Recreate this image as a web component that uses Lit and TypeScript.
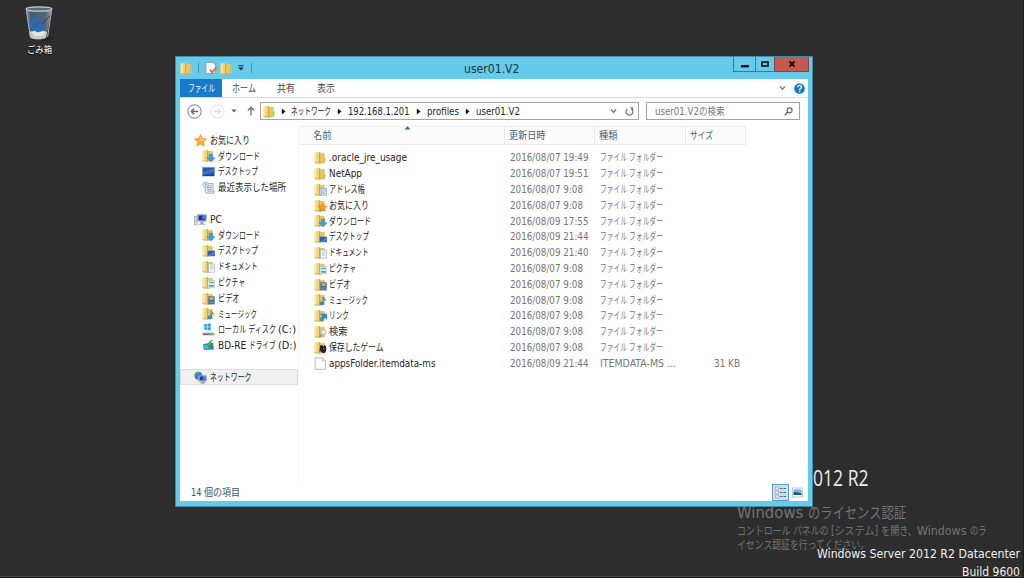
import { LitElement, html, css, svg } from "lit";
import { customElement, property } from "lit/decorators.js";

/** Single-line label condensed or widened to a fixed advance width. */
@customElement("fit-text")
class FitText extends LitElement {
  @property({ type: Number }) w = 0;
  @property() text = "";
  static styles = css`
    :host { display: inline-block; flex: none; white-space: nowrap; line-height: inherit; padding-top: 1.4px; }
    .in { display: inline-block; transform-origin: 0 50%; white-space: pre; }
  `;
  render() {
    return html`<span class="in">${this.text}</span>`;
  }
  updated() {
    const el = this.renderRoot.querySelector(".in") as HTMLElement;
    el.style.transform = "none";
    this.style.width = "auto";
    const natural = el.getBoundingClientRect().width;
    this.style.width = `${this.w}px`;
    if (natural > 0) {
      el.style.transform = `scaleX(${this.w / natural})`;
      el.style.marginRight = `${this.w - natural}px`;
    }
  }
}

const folder = svg`
  <path d="M.8 2 L6.8 .8 L7.8 1.600 L7.8 14.400 L.8 15.200Z" fill="#f1d67a"/>
  <path d="M6.400 2.800 L12 2.200 L13.200 2.800 L13.200 14 L6.400 15.400Z" fill="#e8c75f"/>
  <path d="M.8 2 L3 1.600 L3 15 L.8 15.200Z" fill="#f8e9a8"/>
  <path d="M6 1.800 L7.600 1.600 L7.600 15.200 L6 15.400Z" fill="#cfa83e"/>
  <path d="M.8 13.800 L7.400 14 L13.200 12.600 L13.200 14 L7 15.800 L.8 15.200Z" fill="#d9b348"/>`;

const overlays: Record<string, unknown> = {
  folder: svg`<path d="M12.4 8 h1.8 v5.4 l-1.8 .6z" fill="#e9cb6b"/><rect x="12" y="9.4" width="1.6" height="3" fill="#9bb9a4"/>`,
  contacts: svg`<rect x="7" y="6.6" width="8.6" height="8.4" fill="#e9f3fa" stroke="#7fa5c4" stroke-width=".9"/><path d="M7.4 8.6h8M9.4 11h4.6M9.4 13h4.6M8.6 9v6" stroke="#6ba1cc" stroke-width=".9"/>`,
  fav: svg`<path d="M10.6 5.4l1.6 3.2 3.6.4-2.6 2.5.7 3.6-3.3-1.7-3.3 1.7.7-3.6-2.6-2.5 3.6-.4z" fill="#f89a2a" stroke="#dd6a12" stroke-width=".7"/><path d="M10.6 7.4l.9 2 2 .4-2 1z" fill="#ffd88a"/>`,
  down: svg`<path d="M9 6.400h4.200v4.400H16L11.100 16 6.200 10.800H9z" fill="#3ba0e2" stroke="#1d7cc2" stroke-width=".6"/>`,
  desk: svg`<rect x="7" y="8.4" width="9" height="6.4" fill="#2760b8" stroke="#7b95bd" stroke-width=".7"/><path d="M7.4 14 L15.6 9.4V12L10 14.4z" fill="#4f8cd8"/>`,
  doc: svg`<path d="M8 5h7.4v10H8z" fill="#f6fafd" stroke="#9fb3c6" stroke-width=".8"/><path d="M9.6 7.4h4.4M9.6 9.4h4.4M9.6 11.4h4.4" stroke="#8eb6da" stroke-width=".8"/>`,
  pic: svg`<rect x="7.4" y="5.4" width="8.4" height="9.2" fill="#eef6fa" stroke="#a4b8bf" stroke-width=".7"/><rect x="9" y="7" width="5.4" height="2" fill="#4fa6d4"/><rect x="8.6" y="11" width="6" height="2.2" fill="#5f9c8b"/>`,
  video: svg`<rect x="7.6" y="5.4" width="8" height="9.8" fill="#4d5961"/><rect x="9.4" y="6.4" width="4.4" height="3.4" fill="#8fc1de"/><rect x="9.4" y="10.8" width="4.4" height="3.4" fill="#5f90b4"/><path d="M8.4 6v9M14.8 6v9" stroke="#c9d2d8" stroke-width=".7" stroke-dasharray="1 1"/>`,
  music: svg`<path d="M11.4 4.6v7.6" stroke="#2e8bd0" stroke-width="1.700"/><path d="M11.4 4c.6 2.4 4.400 2.8 3.600 7-.6-2-2.200-2.600-3.600-2.800z" fill="#3ba0e2"/><ellipse cx="9.600" cy="12.800" rx="2.700" ry="2.200" fill="#2e8bd0"/>`,
  link: svg`<path d="M8 6h7.800v7.200l-2.200-2.300c-2 .8-3 2.400-3.200 4.800-3.200-.8-3.400-4.800 .2-7z" fill="#2b8fdd" stroke="#1a6fb8" stroke-width=".5"/>`,
  search: svg`<path d="M9.4 11.6L6.8 15" stroke="#a28d55" stroke-width="1.6"/><circle cx="11.6" cy="8.8" r="3.2" fill="#dcebf3" stroke="#a9b4ba" stroke-width="1.1"/>`,
  game: svg`<path d="M7.6 5.600l2.400-.6 1.600 2 1.200-2 2 1.600 .4 4-1.400 3.800-3 .8-2-2.200-2.200-.4.6-3z" fill="#23211f"/><path d="M11 8.600l2 .4-.6 2z" fill="#9a8f7a"/>`,
};

const glyphs: Record<string, unknown> = {
  star: svg`<path d="M8 .8l2.200 4.700 5.200.6-3.900 3.500 1.100 5.200L8 12.200l-4.600 2.600 1.100-5.200L.6 6.100l5.200-.6z" fill="#fbac3a" stroke="#e88a1c" stroke-width=".9"/><path d="M8 3l1.400 3.400 3.600.5-4.600 1.600z" fill="#ffe19b"/>`,
  screen: svg`<rect x=".6" y="2.800" width="14.800" height="10.800" fill="#2458b0" stroke="#8fa6c8" stroke-width=".9"/><path d="M1 9 L15 4v4L1 12.600z" fill="#4276c8"/><rect x="1" y="12" width="14" height="1.400" fill="#1c3f7e"/>`,
  recent: svg`<path d="M4 3h9.600v9.400H15V14c-.4 1-1 1-2 1H5.500c-1 0-1.500-.6-1.500-1.600z" fill="#eef1f3" stroke="#8c9aa5" stroke-width="1"/><path d="M6 5.800h6M6 8h6M6 10.200h6M7 12.400h6" stroke="#8295a5" stroke-width="1"/><circle cx="4.200" cy="4.400" r="3.300" fill="#dfe9ef" stroke="#9fb0bc"/><path d="M4.200 2.600v2h1.600" stroke="#61778a" stroke-width=".8" fill="none"/>`,
  pc: svg`<rect x=".6" y="4" width="3.200" height="10.600" fill="#cfd6d0" stroke="#8d988f" stroke-width=".6"/><rect x="4.200" y="1.600" width="11.200" height="8.800" fill="#d7dce3" stroke="#9aa2ae" stroke-width=".7"/><rect x="5.400" y="2.800" width="8.800" height="6.400" fill="#1c2fb0"/><path d="M10 2.800h4.200v3L10 9.200z" fill="#4c74e0"/><path d="M8.400 10.600h3l.8 3H7.400z" fill="#9aa2ae"/><rect x="5.800" y="13.200" width="8.600" height="1.400" fill="#b9bfc8"/>`,
  disk: svg`<path d="M2.600 1.400l3.400-.5v3.600H2.600zM6.700.8l4-.6v4.300h-4zM2.600 5.200H6v3.400l-3.400-.5zM6.700 5.200h4v4.100l-4-.6z" fill="#22a6e0"/><path d="M2 10.400h11.600l1.800 2.400H.6z" fill="#dfe3e6"/><rect x=".6" y="12.400" width="14.800" height="2.800" fill="#8f999f"/><rect x="1.400" y="13.200" width="8" height="1" fill="#5b6469"/><rect x="12.400" y="13.200" width="1.800" height="1.100" fill="#62d94f"/>`,
  bd: svg`<path d="M1.400 6.200L13.600 4.600l1 8.200-12.400.8z" fill="#2f7fb0"/><path d="M2.400 7.400L8 6.800l.6 5.600-5.600.4z" fill="#4eb4d8"/><path d="M8.200 9.600L6 6h1.800c.2-2.800 2.200-4.400 5.400-4.600-1.800 1.200-2.300 2.500-2.300 4.400h1.900z" fill="#37b84c" stroke="#209434" stroke-width=".4"/>`,
  net: svg`<circle cx="5.400" cy="5.800" r="4.800" fill="#2c7fd0"/><path d="M2 3.200c2-2.400 4-2 4.600-1.400-.6 1.600-1.200 2.200-2.600 2.600-.6 1.400-2 1.800-2.400.6zM4 7l2.600 1-1 2.200H4.200z" fill="#45b75a"/><rect x="5.800" y="5.600" width="9.600" height="7" fill="#d9dee6" stroke="#7d8796" stroke-width=".6"/><rect x="6.800" y="6.600" width="7.600" height="5" fill="#1a2fb4"/><path d="M11 6.600h3.400v2.200L11 11.600z" fill="#5c82e6"/><path d="M9.400 12.800h2.600v1.400h1.600v1.200H7.800v-1.200h1.600z" fill="#8b94a3"/>`,
  file: svg`<path d="M1.400 1h9.200l3.400 3.400V15.200H1.400z" fill="#fcfcfc" stroke="#a3a3a3" stroke-width=".9"/><path d="M10.400 1.200v3.400h3.400" fill="#eee" stroke="#b1b1b1" stroke-width=".8"/>`,
};

const icon = (name: string) => html`<svg class="ic" viewBox="0 0 16 16">${glyphs[name] ?? svg`${folder}${overlays[name]}`}</svg>`;
const label = (text: string, w: number) => html`<fit-text .text=${text} .w=${w}></fit-text>`;
type Run = [string, number];
/** Mixed-script line: each run keeps its own width. */
const runs = (list: Run[]) => html`<span class="runs">${list.map(([t, w]) => label(t, w))}</span>`;

type Nav = [string, Run[], number];
const nav: (Nav | null)[] = [
  ["star", [["お気に入り", 40]], 0],
  ["down", [["ダウンロード", 42]], 1],
  ["screen", [["デスクトップ", 40]], 1],
  ["recent", [["最近表示した場所", 68]], 1],
  null,
  ["pc", [["PC", 12]], 0],
  ["down", [["ダウンロード", 42]], 1],
  ["desk", [["デスクトップ", 40]], 1],
  ["doc", [["ドキュメント", 39.5]], 1],
  ["pic", [["ピクチャ", 27]], 1],
  ["video", [["ビデオ", 21.5]], 1],
  ["music", [["ミュージック", 39]], 1],
  ["disk", [["ローカル ディスク ", 60], ["(C:)", 18]], 1],
  ["bd", [["BD-RE ", 31], ["ドライブ ", 28.5], ["(D:)", 18.5]], 1],
  null,
  ["net", [["ネットワーク", 41.5]], 0],
];

const files: [string, string, number, string][] = [
  ["folder", ".oracle_jre_usage", 78, "07 19:49"],
  ["folder", "NetApp", 33, "07 19:51"],
  ["contacts", "アドレス帳", 36, "07 9:08"],
  ["fav", "お気に入り", 40, "07 9:08"],
  ["down", "ダウンロード", 42, "09 17:55"],
  ["desk", "デスクトップ", 40, "09 21:44"],
  ["doc", "ドキュメント", 39.5, "09 21:40"],
  ["pic", "ピクチャ", 27, "07 9:08"],
  ["video", "ビデオ", 21.5, "07 9:08"],
  ["music", "ミュージック", 39, "07 9:08"],
  ["link", "リンク", 20, "07 9:08"],
  ["search", "検索", 18.5, "07 9:08"],
  ["game", "保存したゲーム", 54.5, "07 9:08"],
  ["file", "appsFolder.itemdata-ms", 106.5, "09 21:44"],
];

@customElement("app-root")
class AppRoot extends LitElement {
  static styles = css`
    :host { display: block; position: relative; width: 1024px; height: 578px; overflow: hidden; background: #2d2d2d;
      font: 9.7px/16px "DejaVu Sans Condensed", "DejaVu Sans", "Noto Sans CJK JP", sans-serif; color: #1d1d1d; }
    * { box-sizing: border-box; }
    svg { display: block; flex: none; }
    .runs { display: flex; flex: none; }
    .ic { width: 13px; height: 13px; }
    .bin { position: absolute; left: 14px; top: 4px; width: 50px; display: flex; flex-direction: column; align-items: center; color: #fff; font-size: 9px; }
    .binlabel { text-shadow: 0 1px 1px #000; margin-top: -1.5px; }
    .brand { position: absolute; left: 812.5px; top: 461.6px; font: 400 21.5px/30px "Open Sans", "Noto Sans", sans-serif; color: #ececec; }
    .activate { position: absolute; left: 736.5px; top: 502.6px; color: #747474; font-size: 11.7px; line-height: 12.6px; display: flex; flex-direction: column; }
    .acthead { font-size: 15.2px; line-height: 19.6px; }
    .build { position: absolute; right: 4px; top: 545px; color: #f0f0f0; font-size: 11.8px; line-height: 16.1px; display: flex; flex-direction: column; align-items: flex-end; }
    .taskline { position: absolute; left: 0; right: 0; bottom: 0; height: 2px; background: #161616; border-top: 1px solid #474747; }
    .rightline { position: absolute; right: 0; top: 0; bottom: 0; width: 1px; background: #1c1c1c; }

    .window { position: absolute; left: 175px; top: 56px; width: 638px; height: 451px; background: #66caea; border: 1px solid #458ba2; padding: 0 4px 5px; display: flex; flex-direction: column; }
    .title { height: 22px; flex: none; display: grid; grid-template-columns: 235px 1fr 240px; align-items: center; }
    .quick { display: flex; align-items: center; }
    .vr { width: 1px; height: 10px; background: #4a93ac; }
    .q1 { margin-right: 4.5px; } .q2 { margin: 0 2px 0 5px; } .q3 { margin-right: 5px; } .q4 { margin-right: 7px; }
    .caption { font-size: 12px; display: flex; justify-content: center; color: #173540; }
    .ctrls { display: flex; justify-content: flex-end; align-self: start; margin-right: -1px; }
    .btn { height: 15px; border: 1px solid #377d96; border-top: 0; display: grid; place-items: center; }
    .min { width: 22px; border-right: 0; } .max { width: 19px; border-right: 0; } .close { width: 35px; background: #c35a50; border-color: #7a4a4a; }
    .body { flex: 1; min-height: 0; background: #fff; display: flex; flex-direction: column; }
    .tabs { height: 19px; flex: none; display: flex; align-items: center; border-bottom: 1px solid #dadbdc; color: #444; }
    .filetab { width: 42px; height: 18px; background: #1979ca; color: #fff; display: grid; place-items: center; margin-right: 10px; }
    .t2 { margin-right: 21px; } .t3 { margin-right: 22px; }
    .tabend { margin-left: auto; display: flex; align-items: center; gap: 8px; padding-right: 3px; }
    .addr { height: 27px; flex: none; display: flex; align-items: center; padding: 0 8px 1px 7px; }
    .crumbs { width: 378.5px; height: 18px; border: 1px solid #a3a3a3; display: flex; align-items: center; padding: 0 4px 0 1.5px; }
    .a1 { margin-right: 8px; } .a2 { margin-right: 6px; } .a3 { margin-right: 10px; } .a4 { margin-right: 5px; }
    .tri { margin: 0 6px; }
    .crumbs .first { margin: 0 5.5px 0 5px; }
    .cend { margin-left: auto; display: flex; align-items: center; gap: 8px; }
    .find { margin-left: auto; width: 154px; height: 18px; border: 1px solid #a3a3a3; color: #757575; display: flex; align-items: center; justify-content: space-between; padding: 0 6px 0 7.5px; }
    .main { flex: 1; min-height: 0; display: grid; grid-template-columns: 119px 1fr; }
    .nav { display: flex; flex-direction: column; padding-top: 7.3px; border-right: 1px solid #f7f7f7; }
    .item { height: 15.81px; display: flex; align-items: center; gap: 3px; padding-left: 14px; }
    .sub { padding-left: 22px; }
    .sel { background: #f0f0f0; outline: 1px solid #dcdcdc; outline-offset: -1px; }
    .list { padding-left: 1px; display: flex; flex-direction: column; }
    .head { width: 446px; height: 19px; margin-top: 1px; display: grid; grid-template-columns: 204.5px 90.5px 90.5px 60.5px; background: #fcfcfc; border: 1px solid #ececec; border-left: 0; color: #43607f; margin-bottom: 4px; position: relative; }
    .hc { display: flex; align-items: center; padding: 0 0 1px 4px; border-right: 1px solid #e6e6e6; }
    .hc:first-child { padding-left: 13px; } .hc:last-of-type { border-right: 0; }
    .sort { position: absolute; left: 103.5px; top: -1px; }
    .row { height: 15.81px; width: 446px; display: grid; grid-template-columns: 209.5px 90.5px 1fr 27px; align-items: center; color: #757575; padding-right: 5px; }
    .name { display: flex; align-items: center; gap: 2px; padding-left: 14px; color: #1d1d1d; }
    .status { height: 18px; flex: none; display: flex; align-items: center; justify-content: space-between; padding: 0 5px 0 10.5px; color: #3a536e; }
    .views { display: flex; align-items: center; gap: 3px; }
    .on { width: 17px; height: 17px; background: #c4e4f6; border: 1px solid #5b9fc4; display: grid; place-items: center; }
  `;
  tri(cls = "") {
    return html`<svg class="tri ${cls}" width="5" height="7" viewBox="0 0 5 7"><path d="M.8.6L4.600 3.500.8 6.400z" fill="#111"/></svg>`;
  }
  down(w = 1.4) {
    return html`<svg width="7" height="6" viewBox="0 0 7 6"><path d="M1 1.500l2.500 2.700L6 1.500" fill="none" stroke="#808080" stroke-width=${w}/></svg>`;
  }
  render() {
    return html`
      <div class="bin">
        <svg width="34" height="38" viewBox="0 0 34 38">
          <defs><linearGradient id="g" x1="0" x2="1"><stop offset="0" stop-color="#8997a3"/><stop offset=".2" stop-color="#465b70"/><stop offset=".75" stop-color="#52677b"/><stop offset="1" stop-color="#98a3ac"/></linearGradient></defs>
          <ellipse cx="20" cy="34" rx="12" ry="2.500" fill="#222"/>
          <path d="M4 5l4 28.500c2 2.600 14 2.600 16 0L30 5z" fill="url(#g)"/>
          <path d="M7.500 28c3-2 14-2 17.500 0l-.9 5.500c-2 2.400-14 2.400-16 0z" fill="#c9cccd"/>
          <path d="M10 28.500l4-1.500 3 1.800 4-2 3 2-4 3-7 .5z" fill="#e5e6e6"/>
          <path d="M9 16.500l4-3.500 4 2.500-1.500 3.500-2.500-1-1.500 3.500 2.500 4-3 1.500L8 21.500zM15.500 20.500l4-1.500 2.500 4.500-2.500 4-5.500.8-.5-3.500 2.500-.3z" fill="#2469c9"/>
          <path d="M20 20l8-8" stroke="#36424e" stroke-width="1"/>
          <ellipse cx="17" cy="5" rx="13" ry="2.200" fill="#5b6974" stroke="#c5cdd2" stroke-width="1.200"/>
          <path d="M4.500 7l3.900 26M29.500 7l-3.900 26" stroke="#a9b4bc" stroke-width="1"/>
        </svg>
        <div class="binlabel">${label("ごみ箱", 25)}</div>
      </div>
      <div class="brand">${label("012 R2", 55.5)}</div>
      <div class="activate">
        <div class="acthead">${runs([["Windows ", 71], ["のライセンス認証", 98]])}</div>
        <div>${runs([["コントロール パネルの ", 94], ["[システム] ", 50], ["を開き、", 36], ["Windows ", 53], ["のラ", 16.5]])}</div>
        <div>${label("イセンス認証を行ってください。", 132)}</div>
      </div>
      <div class="build">${label("Windows Server 2012 R2 Datacenter", 203)}${label("Build 9600", 58)}</div>
      <div class="taskline"></div><div class="rightline"></div>

      <div class="window">
        <div class="title">
          <div class="quick">
            <svg class="ic q1" viewBox="0 0 16 16">${folder}${overlays.folder}</svg><i class="vr"></i>
            <svg class="q2" width="14" height="14" viewBox="0 0 14 14"><path d="M2 1.500h7l2.500 2.500v8.500H2z" fill="#fafafa" stroke="#9a9a9a" stroke-width=".9"/><path d="M6 8.500l2.200 3L12.500 6" fill="none" stroke="#e8704a" stroke-width="2"/></svg>
            <svg class="ic q3" viewBox="0 0 16 16">${folder}${overlays.folder}</svg>
            <svg class="q4" width="6" height="6" viewBox="0 0 6 6"><path d="M.5.7h5" stroke="#222"/><path d="M.3 2.500h5.400L3 5.300z" fill="#111"/></svg><i class="vr"></i>
          </div>
          <div class="caption">${label("user01.V2", 55.5)}</div>
          <div class="ctrls">
            <div class="btn min"><svg width="8" height="8"><rect x="0" y="5" width="8" height="2.400" fill="#111"/></svg></div>
            <div class="btn max"><svg width="8" height="8"><rect x="1" y="2" width="6" height="4" fill="none" stroke="#111" stroke-width="1.600"/></svg></div>
            <div class="btn close"><svg width="8" height="8"><path d="M1.500 1.300l5 5.400M6.500 1.300l-5 5.400" stroke="#111" stroke-width="1.800"/></svg></div>
          </div>
        </div>
        <div class="body">
          <div class="tabs">
            <div class="filetab">${label("ファイル", 27)}</div>
            <span class="t2">${label("ホーム", 24)}</span><span class="t3">${label("共有", 18)}</span>${label("表示", 18)}
            <div class="tabend">${this.down()}
              <svg width="11" height="11" viewBox="0 0 11 11"><circle cx="5.500" cy="5.500" r="5.300" fill="#1a76cc"/><path d="M3.700 4.200c0-2.400 3.700-2.400 3.700-.1 0 1.400-1.800 1.300-1.800 2.800" fill="none" stroke="#fff" stroke-width="1.300"/><rect x="4.900" y="7.700" width="1.400" height="1.400" fill="#fff"/></svg>
            </div>
          </div>
          <div class="addr">
            <svg class="a1" width="15" height="15" viewBox="0 0 15 15"><circle cx="7.500" cy="7.500" r="6.700" fill="#fff" stroke="#7c7c7c" stroke-width="1"/><path d="M11 7.500H4.600M7.200 4.600L4.300 7.500l2.900 2.900" fill="none" stroke="#666" stroke-width="1.400"/></svg>
            <svg class="a2" width="15" height="15" viewBox="0 0 15 15"><circle cx="7.500" cy="7.500" r="6.700" fill="#fff" stroke="#dedede"/><path d="M4 7.500h6.400M7.800 4.600l2.900 2.900-2.900 2.900" fill="none" stroke="#dcdcdc" stroke-width="1.300"/></svg>
            <svg class="a3" width="6" height="4" viewBox="0 0 6 4"><path d="M.3.500h5.400L3 3.500z" fill="#666"/></svg>
            <svg class="a4" width="8" height="10" viewBox="0 0 8 10"><path d="M4 9.500V1.500M.8 4.500L4 1.200l3.200 3.300" fill="none" stroke="#777" stroke-width="1.400"/></svg>
            <div class="crumbs">
              ${icon("folder")}${this.tri("first")}${label("ネットワーク", 40)}${this.tri()}${label("192.168.1.201", 61.5)}${this.tri()}${label("profiles", 32)}${this.tri()}${label("user01.V2", 44)}
              <div class="cend">${this.down(1.6)}<svg width="9" height="9" viewBox="0 0 9 9"><path d="M6.200 1.800A3.400 3.400 0 1 1 2.400 2" fill="none" stroke="#777" stroke-width="1.300"/><path d="M4.900.2h3.200v3.300z" fill="#777"/></svg></div>
            </div>
            <div class="find">${runs([["user01.V2", 44], ["の検索", 25.5]])}<svg width="9" height="9" viewBox="0 0 9 9"><circle cx="5.600" cy="3.300" r="2.500" fill="none" stroke="#666" stroke-width="1.200"/><path d="M3.800 5.100L.8 8.300" stroke="#666" stroke-width="1.500"/></svg></div>
          </div>
          <div class="main">
            <div class="nav">
              ${nav.map((n) => n ? html`<div class="item ${n[2] ? "sub" : ""} ${n[0] === "net" ? "sel" : ""}">${icon(n[0])}${runs(n[1])}</div>` : html`<div class="item"></div>`)}
            </div>
            <div class="list">
              <div class="head">
                <div class="hc">${label("名前", 18.5)}</div><div class="hc">${label("更新日時", 36.5)}</div><div class="hc">${label("種類", 18.5)}</div><div class="hc">${label("サイズ", 23)}</div>
                <svg class="sort" width="7" height="4" viewBox="0 0 7 4"><path d="M.5 3.500L3.500.2l3 3.300z" fill="#44607f"/></svg>
              </div>
              ${files.map(([i, n, w, d]) => html`<div class="row">
                <div class="name">${icon(i)}${label(n, w)}</div>
                ${label("2016/08/" + d, d.length === 8 ? 78.5 : 73)}
                ${i === "file" ? html`${label("ITEMDATA-MS ...", 76)}${label("31 KB", 26)}` : label("ファイル フォルダー", 63)}
              </div>`)}
            </div>
          </div>
          <div class="status">${label("14 個の項目", 49)}
            <div class="views">
              <div class="on"><svg width="13" height="13" viewBox="0 0 13 13"><path d="M1.500 1h3v3h-3zM1.500 5h3v3h-3zM1.500 9h3v3h-3z" fill="#f6e9e4" stroke="#b99e98" stroke-width=".7"/><path d="M6 2.500h2.400M9.300 2.500H12M6 6.500h2.400M9.300 6.500H12M6 10.500h2.400M9.300 10.500H12" stroke="#4c6984" stroke-width="1"/></svg></div>
              <svg width="11" height="11" viewBox="0 0 11 11"><rect x=".5" y="1" width="10" height="9" fill="#fff" stroke="#a9bccb" stroke-width=".8"/><rect x="1.500" y="2.400" width="8" height="5.600" fill="#6bb5e6"/><path d="M1.500 5.500c3-1.500 5 1 8 .6V8h-8z" fill="#26596c"/></svg>
            </div>
          </div>
        </div>
      </div>`;
  }
}
